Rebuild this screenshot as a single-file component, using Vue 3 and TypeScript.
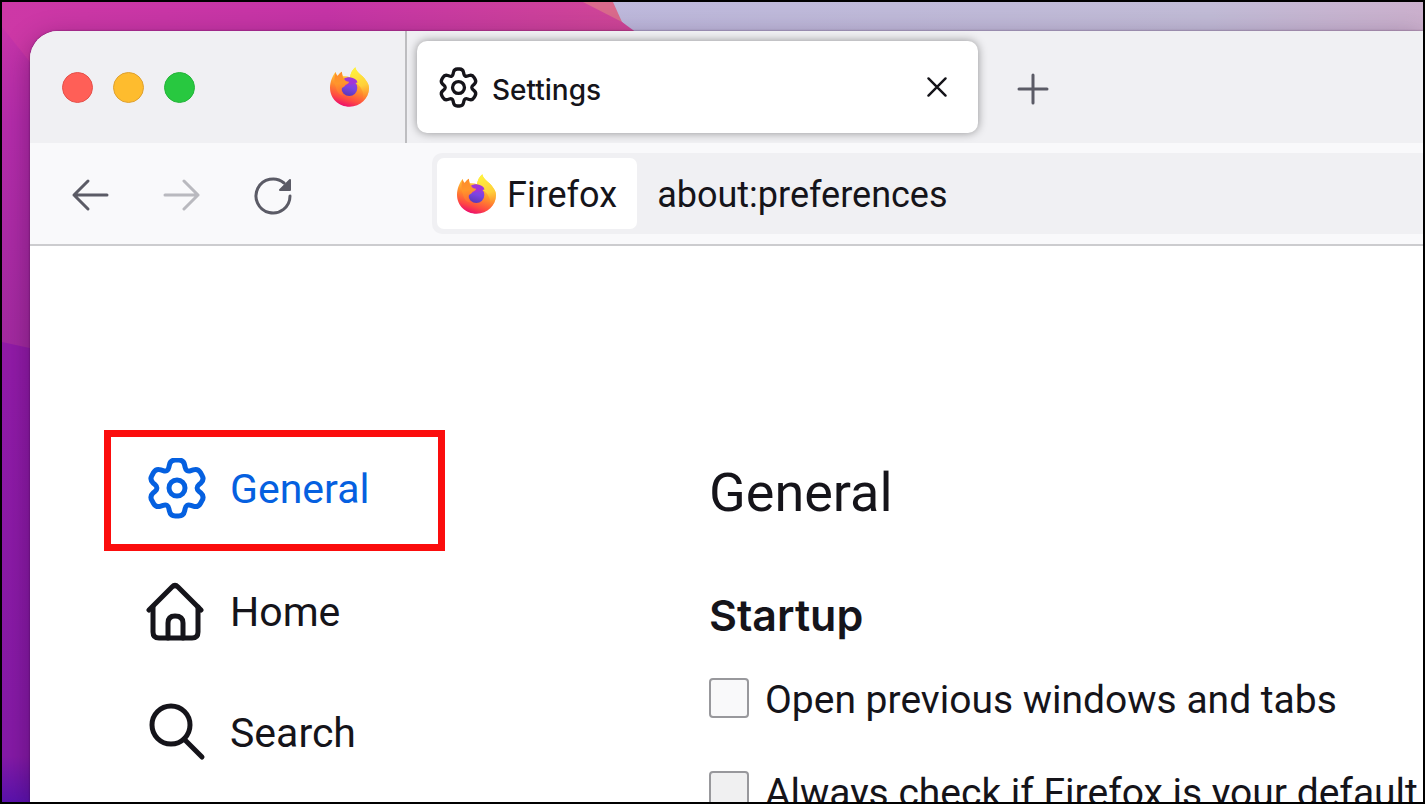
<script setup lang="ts">
import { ref } from 'vue'

interface NavItem {
  id: string
  label: string
}

interface StartupOption {
  id: string
  label: string
  checked: boolean
}

const navItems: NavItem[] = [
  { id: 'general', label: 'General' },
  { id: 'home', label: 'Home' },
  { id: 'search', label: 'Search' },
]
const active = ref('general')

const options = ref<StartupOption[]>([
  { id: 'restore', label: 'Open previous windows and tabs', checked: false },
  { id: 'default', label: 'Always check if Firefox is your default', checked: false },
])

type Point = [number, number]

// Six-toothed gear outline with every corner rounded, centred on the origin.
function gearPath(): string {
  const tooth: [Point, number][] = [
    [[-6.6, -28], 5],
    [[6.6, -28], 5],
    [[9.1, -15.8], 5],
  ]
  const vertices: [Point, number][] = []
  for (let i = 0; i < 6; i++) {
    const a = (i * Math.PI) / 3
    for (const [[x, y], r] of tooth) {
      vertices.push([[x * Math.cos(a) - y * Math.sin(a), x * Math.sin(a) + y * Math.cos(a)], r])
    }
  }
  const towards = (from: Point, to: Point, d: number): string => {
    const len = Math.hypot(to[0] - from[0], to[1] - from[1])
    const x = from[0] + ((to[0] - from[0]) * d) / len
    const y = from[1] + ((to[1] - from[1]) * d) / len
    return `${x.toFixed(2)} ${y.toFixed(2)}`
  }
  const n = vertices.length
  const parts = vertices.map(([p, r], i) => {
    const prev = vertices[(i + n - 1) % n][0]
    const next = vertices[(i + 1) % n][0]
    const start = towards(p, prev, r)
    const end = towards(p, next, r)
    return `${i === 0 ? 'M' : 'L'}${start}Q${p[0].toFixed(2)} ${p[1].toFixed(2)} ${end}`
  })
  return parts.join('') + 'Z'
}

const gear = gearPath()
</script>

<template>
  <div class="desktop">
    <svg class="wallpaper" viewBox="0 0 1421 800" preserveAspectRatio="xMinYMin slice" aria-hidden="true">
      <defs>
        <linearGradient id="wp-sky" x1="0" x2="1" y1="0" y2="0">
          <stop offset="0.4" stop-color="#bdb8dc" />
          <stop offset="0.85" stop-color="#c1bbd6" />
          <stop offset="1" stop-color="#cbb0cd" />
        </linearGradient>
        <linearGradient id="wp-pink" x1="0" x2="0" y1="0" y2="1">
          <stop offset="0" stop-color="#cb37a8" />
          <stop offset="0.15" stop-color="#b52cab" />
          <stop offset="0.43" stop-color="#a32aa0" />
        </linearGradient>
        <linearGradient id="wp-top" x1="0" x2="1" y1="0" y2="0">
          <stop offset="0" stop-color="#cd38a6" />
          <stop offset="0.5" stop-color="#c534a6" />
          <stop offset="1" stop-color="#d04796" />
        </linearGradient>
        <linearGradient id="wp-purple" x1="0" x2="0" y1="0" y2="1">
          <stop offset="0" stop-color="#921ba8" />
          <stop offset="0.9" stop-color="#851aa6" />
          <stop offset="1" stop-color="#5a12ad" />
        </linearGradient>
      </defs>
      <rect width="1421" height="800" fill="url(#wp-sky)" />
      <path d="M570 0H611L620 20L650 50H560Z" fill="#da6a8c" />
      <rect width="60" height="800" fill="url(#wp-pink)" />
      <path d="M0 0H581L620 20L650 42V60H28L0 25Z" fill="url(#wp-top)" />
      <path d="M0 340L60 353V800H0Z" fill="url(#wp-purple)" />
    </svg>

    <svg class="sprite" aria-hidden="true">
      <defs>
        <linearGradient id="fx-body" x1="0.75" y1="0.1" x2="0.45" y2="1">
          <stop offset="0" stop-color="#ffe94a" />
          <stop offset="0.3" stop-color="#ffbe36" />
          <stop offset="0.55" stop-color="#ff8a2c" />
          <stop offset="0.82" stop-color="#ff4a42" />
          <stop offset="1" stop-color="#ee1468" />
        </linearGradient>
        <linearGradient id="fx-tail" x1="0.4" y1="0" x2="0.6" y2="1">
          <stop offset="0" stop-color="#fff23e" />
          <stop offset="0.55" stop-color="#ffd03a" />
          <stop offset="1" stop-color="#ff8730" stop-opacity="0" />
        </linearGradient>
        <linearGradient id="fx-globe" x1="0.7" y1="0" x2="0.4" y2="1">
          <stop offset="0" stop-color="#a43be0" />
          <stop offset="0.5" stop-color="#7a45e0" />
          <stop offset="1" stop-color="#5a38b8" />
        </linearGradient>
        <linearGradient id="fx-head" x1="0.2" y1="0" x2="0.3" y2="1">
          <stop offset="0" stop-color="#ff8a2c" />
          <stop offset="0.5" stop-color="#ff962b" />
          <stop offset="1" stop-color="#ff6a35" />
        </linearGradient>
      </defs>
      <symbol id="icon-firefox" viewBox="0 0 117 118">
        <path d="M17 14C18 20 20 24 23 26C27 20 31 16 36 13C36 19 37 24 40 27C47 26 54 27 60 30C62 18 67 7 76 0C78 10 84 15 92 22C101 29 108 38 111 44C115 50 117 56 117 63C117 94 91 118 59 118C26 118 0 93 0 61C0 44 7 26 17 14Z" fill="url(#fx-body)" />
        <path d="M76 0C78 10 84 15 92 22C101 29 108 38 111 44C115 50 117 56 117 63C117 80 108 94 96 104C102 90 101 76 94 64C87 49 63 40 60 30C62 18 67 7 76 0Z" fill="url(#fx-tail)" />
        <circle cx="58" cy="62" r="24" fill="url(#fx-globe)" />
        <path d="M42 34C52 27 68 28 78 37C81 40 82 43 82 46C77 46 73 47 70 50L46 56Z" fill="#a136d8" />
        <path d="M17 14C18 20 20 24 23 26C27 20 31 16 36 13C36 22 37 28 42 34C45 40 50 42 57 43C57 48 50 51 46 53C46 57 41 58 36 62C32 68 34 78 41 84C29 84 20 73 18 59C12 48 12 30 17 14Z" fill="url(#fx-head)" />
      </symbol>
    </svg>

    <div class="window">
      <header class="tab-bar">
        <div class="lights">
          <button type="button" class="light red" aria-label="Close window"></button>
          <button type="button" class="light amber" aria-label="Minimise window"></button>
          <button type="button" class="light green" aria-label="Zoom window"></button>
        </div>
        <button type="button" class="pinned" aria-label="Firefox View">
          <svg class="fx-icon"><use href="#icon-firefox" /></svg>
        </button>
        <div class="tab">
          <svg class="tab-gear" viewBox="-31 -31 62 62" aria-hidden="true">
            <path :d="gear" />
            <circle r="9" />
          </svg>
          <span class="tab-title">Settings</span>
          <button type="button" class="tab-close" aria-label="Close tab">
            <svg viewBox="0 0 18 18"><path d="M2 2L16 16M16 2L2 16" /></svg>
          </button>
        </div>
        <button type="button" class="new-tab" aria-label="New tab">
          <svg viewBox="0 0 32 32"><path d="M16 2V30M2 16H30" /></svg>
        </button>
      </header>

      <div class="toolbar">
        <nav class="history" aria-label="History">
          <button type="button" class="tool" aria-label="Back">
            <svg viewBox="0 0 40 40"><path d="M36 20H3M17 6L3 20L17 34" /></svg>
          </button>
          <button type="button" class="tool" aria-label="Forward" disabled>
            <svg viewBox="0 0 40 40"><path d="M3 20H36M22 6L36 20L22 34" /></svg>
          </button>
          <button type="button" class="tool" aria-label="Reload">
            <svg viewBox="0 0 40 40">
              <path d="M37 21A17 17 0 1 1 31 8" />
              <path class="solid" d="M37 5V15H27Z" />
            </svg>
          </button>
        </nav>
        <div class="url-bar">
          <button type="button" class="identity">
            <svg class="fx-icon" aria-hidden="true"><use href="#icon-firefox" /></svg>
            <span>Firefox</span>
          </button>
          <input class="address" type="text" value="about:preferences" aria-label="Address" spellcheck="false" />
        </div>
      </div>

      <div class="page">
        <nav class="sidebar" aria-label="Categories">
          <a
            v-for="item in navItems"
            :key="item.id"
            class="nav-item"
            :class="{ active: active === item.id }"
            :href="'#' + item.id"
            @click.prevent="active = item.id"
          >
            <svg v-if="item.id === 'general'" class="nav-icon" viewBox="-31 -30 62 62" aria-hidden="true">
              <path :d="gear" />
              <circle r="8" />
            </svg>
            <svg v-else-if="item.id === 'home'" class="nav-icon" viewBox="0 0 62 62" aria-hidden="true">
              <path d="M3 29L26 6Q29 3 32 6L55 29" />
              <path d="M7 26V51Q7 57 13 57H46Q52 57 52 51V26" />
              <path d="M22 57V42Q22 35 29 35Q37 35 37 42V57" />
            </svg>
            <svg v-else class="nav-icon" viewBox="0 0 62 62" aria-hidden="true">
              <circle cx="25" cy="23" r="19" />
              <path d="M38 37L56 55" />
            </svg>
            <span>{{ item.label }}</span>
          </a>
        </nav>

        <main class="content">
          <h1>General</h1>
          <h2>Startup</h2>
          <div v-for="option in options" :key="option.id" class="option">
            <input :id="option.id" v-model="option.checked" type="checkbox" :class="option.id" />
            <label :for="option.id">{{ option.label }}</label>
          </div>
        </main>
      </div>
    </div>
  </div>
</template>

<style>
html,
body {
  overflow: hidden;
}
</style>

<style scoped>
.desktop {
  position: relative;
  box-sizing: border-box;
  display: flex;
  height: 100vh;
  padding: 29px 0 0 28px;
  overflow: hidden;
  border: 2px solid #000;
  color: #15141a;
  font-family: Roboto, Inter, 'Liberation Sans', sans-serif;
}

.desktop *,
.desktop *::before {
  box-sizing: border-box;
}

.wallpaper {
  position: absolute;
  inset: 0;
  width: 100%;
  height: 100%;
}

.sprite {
  position: absolute;
  width: 0;
  height: 0;
}

button {
  display: flex;
  align-items: center;
  justify-content: center;
  padding: 0;
  border: 0;
  background: none;
  color: inherit;
  font: inherit;
}

svg {
  display: block;
  flex: none;
}

.window {
  position: relative;
  display: flex;
  flex: 1;
  flex-direction: column;
  min-width: 0;
  overflow: hidden;
  border-top-left-radius: 28px;
  background: #fff;
  box-shadow: 0 0 2px rgba(40, 0, 50, 0.6), 0 8px 28px rgba(40, 0, 50, 0.4);
}

.tab-bar {
  display: flex;
  flex: none;
  align-items: center;
  height: 112px;
  padding-left: 32px;
  background: #f0f0f3;
}

.lights {
  display: flex;
  gap: 20px;
}

.light {
  width: 31px;
  height: 31px;
  border-radius: 50%;
}

.red {
  border: 1px solid #e5504a;
  background: #ff5f57;
}

.amber {
  border: 1px solid #dfa130;
  background: #febc2e;
}

.green {
  border: 1px solid #25b53a;
  background: #28c840;
}

.pinned {
  height: 100%;
  margin-left: 98px;
  padding: 0 36px 0 37px;
  border-right: 2px solid #bdbdc0;
}

.fx-icon {
  width: 39px;
  height: 40px;
}

.tab {
  display: flex;
  align-items: center;
  width: 561px;
  height: 92px;
  margin-left: 10px;
  padding: 0 30px 0 21px;
  border-radius: 10px;
  background: #fff;
  box-shadow: 0 0 10px rgba(0, 0, 0, 0.4);
}

.tab-gear {
  width: 41px;
  height: 41px;
  fill: none;
  stroke: #15141a;
  stroke-width: 5;
}

.tab-title {
  flex: 1;
  padding-top: 5px;
  margin-left: 13px;
  font-family: Inter, Roboto, sans-serif;
  font-size: 28px;
  font-weight: 500;
  line-height: 36px;
}

.tab-close svg {
  width: 22px;
  height: 22px;
  fill: none;
  stroke: #15141a;
  stroke-linecap: round;
  stroke-width: 2;
}

.new-tab {
  margin-left: 39px;
  padding-top: 3px;
}

.new-tab svg {
  width: 32px;
  height: 32px;
  fill: none;
  stroke: #5b5b66;
  stroke-linecap: round;
  stroke-width: 3;
}

.toolbar {
  display: flex;
  flex: none;
  align-items: center;
  height: 103px;
  padding-left: 41px;
  border-bottom: 2px solid #cccccf;
  background: #f9f9fb;
}

.history {
  display: flex;
  gap: 51px;
  padding-top: 3px;
}

.tool svg {
  width: 40px;
  height: 40px;
  fill: none;
  stroke: #5b5b66;
  stroke-linecap: round;
  stroke-linejoin: round;
  stroke-width: 3;
}

.tool:disabled {
  opacity: 0.4;
}

.tool .solid {
  fill: #5b5b66;
  stroke-width: 2;
}

.url-bar {
  display: flex;
  flex: 1;
  align-items: center;
  min-width: 0;
  height: 81px;
  margin-left: 139px;
  padding: 5px;
  border-radius: 10px 0 0 10px;
  background: #f0f0f3;
  font-size: 36px;
}

.identity {
  gap: 11px;
  height: 71px;
  padding: 0 20px;
  border-radius: 7px;
  background: #fff;
}

.identity span {
  padding-top: 3px;
}

.address {
  flex: 1;
  min-width: 0;
  padding: 3px 0 0 20px;
  border: 0;
  outline: 0;
  background: none;
  color: inherit;
  font: inherit;
}

.page {
  display: flex;
  flex: 1;
  min-height: 0;
  padding-left: 74px;
}

.sidebar {
  flex: none;
  width: 341px;
  padding-top: 184px;
}

.nav-item {
  display: flex;
  align-items: center;
  gap: 22px;
  height: 121px;
  padding-left: 42px;
  color: inherit;
  font-size: 41px;
  line-height: 48px;
  text-decoration: none;
}

.nav-item.active {
  border: 7px solid #fb0d0d;
  padding: 0 0 3px 35px;
  color: #0560e0;
}

.nav-icon {
  width: 62px;
  height: 62px;
  fill: none;
  stroke: currentColor;
  stroke-linecap: round;
  stroke-linejoin: round;
  stroke-width: 5;
}

.content {
  flex: 1;
  min-width: 0;
  margin-left: 264px;
  padding-top: 215px;
  overflow: hidden;
}

h1 {
  margin: 0;
  font-size: 54px;
  font-weight: 400;
  line-height: 64px;
}

h2 {
  margin: 64px 0 31px;
  font-family: Inter, Roboto, sans-serif;
  font-size: 43px;
  font-weight: 600;
  line-height: 52px;
}

.option {
  display: flex;
  align-items: center;
  gap: 16px;
  height: 52px;
  margin-bottom: 41px;
  font-size: 39px;
  line-height: 52px;
  white-space: nowrap;
}

.option label {
  padding-top: 3px;
}

.option input {
  flex: none;
  width: 40px;
  height: 40px;
  margin: 0;
  border: 2px solid #98989c;
  border-radius: 4px;
  appearance: none;
  background: #f9f9fa;
}

.option .default {
  background: #f0f0f1;
}

.option input:checked {
  background: #0560e0;
}
</style>
